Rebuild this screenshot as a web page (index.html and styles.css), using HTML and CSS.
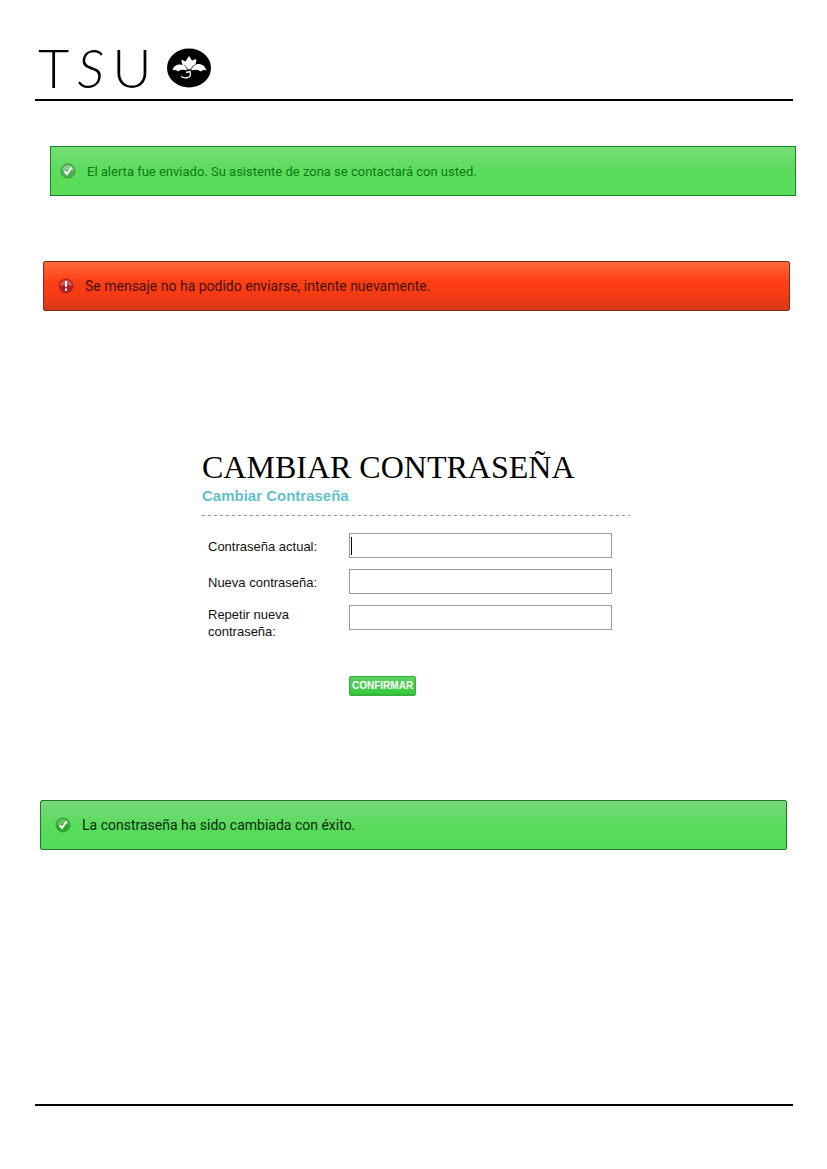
FILE: index.html
```html
<!DOCTYPE html>
<html lang="es">
<head>
<meta charset="utf-8">
<title>TSU - Cambiar Contraseña</title>
<link rel="stylesheet" href="styles.css">
</head>
<body>
<div class="page">
  <header class="header">
    <div class="wordmark"><span>T</span><em>S</em><span>U</span></div>
    <svg class="emblem" viewBox="0 0 44 40" aria-hidden="true">
      <ellipse cx="22" cy="20" rx="22" ry="19.5" fill="#000"/>
      <g fill="#fff">
        <path d="M20.500 21.500C16.500 19 14 15 14.500 11.500L18.500 13.500L22 8L25 12.500L29 11C30 15 27.500 19 23.500 21.500Z"/>
        <path d="M5.500 22.500C6.500 17 12 15.500 16 17C18 18.500 19.500 20.500 20 22.500C17 21.500 13 21.500 11 23.500C9 21.800 7 21.800 5.500 22.500Z"/>
        <path d="M39.500 22.500C38 17 33 15 29 16.500C27 18 25 20 24 22.500C28 21 31 21.500 34 23.500C36 21.800 38 21.800 39.500 22.500Z"/>
      </g>
      <path d="M17.500 17L21.500 22M27 17L23 22" fill="none" stroke="#000" stroke-width=".7"/>
      <path d="M19 24.500L23 23.500Q24.500 28.500 21 29.500Q17 30.500 14 28.500" fill="none" stroke="#fff" stroke-width="1.300"/>
    </svg>
  </header>

  <main class="content">
    <div class="alert sent" role="status">
      <svg class="icon" viewBox="0 0 16 16" aria-hidden="true">
        <circle cx="8" cy="8" r="7" fill="#4fae55" stroke="#3a9441"/>
        <path d="M2 8A6 6 0 0 1 14 8Q8 6 2 8Z" fill="#8aca8d"/>
        <path d="M4.500 8L7 11L11.500 4.500" fill="none" stroke="#fff" stroke-width="2"/>
      </svg>
      <p>El alerta fue enviado. Su asistente de zona se contactará con usted.</p>
    </div>

    <div class="alert failed" role="alert">
      <svg class="icon" viewBox="0 0 16 16" aria-hidden="true">
        <circle cx="8" cy="8" r="7" fill="#b51c20" stroke="#a3292a"/>
        <path d="M2 8A6 6 0 0 1 14 8Q8 6 2 8Z" fill="#d65a55"/>
        <path d="M8 3V9M8 10.500V13" stroke="#fff" stroke-width="2"/>
      </svg>
      <p>Se mensaje no ha podido enviarse, intente nuevamente.</p>
    </div>

    <form class="password">
      <h1>CAMBIAR CONTRASEÑA</h1>
      <h2>Cambiar Contraseña</h2>
      <svg class="rule" aria-hidden="true"><line x1="0" y1="1" x2="100%" y2="1"/></svg>
      <div class="fields">
        <label for="current">Contraseña actual:</label>
        <input class="active" id="current" type="password">
        <label for="new">Nueva contraseña:</label>
        <input id="new" type="password">
        <label for="repeat">Repetir nueva contraseña:</label>
        <input id="repeat" type="password">
        <button type="submit">CONFIRMAR</button>
      </div>
    </form>

    <div class="alert changed" role="status">
      <svg class="icon" viewBox="0 0 16 16" aria-hidden="true">
        <circle cx="8" cy="8" r="7" fill="#26a62c" stroke="#35a33a"/>
        <path d="M2 8A6 6 0 0 1 14 8Q8 6 2 8Z" fill="#65bf66"/>
        <path d="M4.500 8L7 11L11.500 4.500" fill="none" stroke="#fff" stroke-width="2"/>
      </svg>
      <p>La constraseña ha sido cambiada con éxito.</p>
    </div>
  </main>
  <footer class="footer"></footer>
</div>
</body>
</html>
```
FILE: styles.css
```css
* { box-sizing: border-box; }
body {
  margin: 0;
  background: #fff;
  color: #111;
  font: 13px/17px "Liberation Sans", Arial, sans-serif;
}
h1, h2, p { margin: 0; }
.page {
  display: flex;
  flex-direction: column;
  min-height: 100vh;
  padding: 48px 34px 63px 35px;
}
.header {
  display: flex;
  gap: 16px;
  height: 53px;
  padding-left: 3px;
  border-bottom: 2px solid #000;
}
.wordmark {
  display: flex;
  gap: 8px;
  color: #000;
  font: 300 54px/40px Lato, sans-serif;
}
.emblem { width: 44px; height: 40px; }
.content {
  display: flex;
  flex: 1;
  flex-direction: column;
}
.alert {
  display: flex;
  align-items: center;
  gap: 11px;
  min-height: 50px;
  padding: 0 14px;
  border: 1px solid;
  font-family: Roboto, sans-serif;
  font-size: 14px;
}
.icon { flex: none; width: 16px; height: 16px; }
.sent {
  margin: 45px -3px 0 15px;
  padding-left: 9px;
  border-color: #168526;
  background: linear-gradient(#78de78, #5bdc5b 50%, #5bdc5b);
  color: #0b7a16;
  font-size: 13px;
}
.failed {
  margin: 65px 3px 0 8px;
  border-color: #842a17;
  border-radius: 2px;
  background: linear-gradient(#ff6a3c, #ff3e14 42%, #f83b12 65%, #d43a1a);
  color: #431108;
}
.changed {
  margin: 104px 6px 0 5px;
  border-color: #22772b;
  border-radius: 2px;
  background: linear-gradient(#78d87c, #57dc5b 55%, #54dc56);
  color: #0c280d;
}
.password {
  width: 100%;
  max-width: 595px;
  margin-top: 138px;
  padding-left: 167px;
}
.password h1 {
  color: #000;
  font: 400 32px/36px "Liberation Serif", serif;
  white-space: nowrap;
}
.password h2 {
  color: #62bfcb;
  font: 700 15px/22px "Liberation Sans", sans-serif;
}
.rule { display: block; width: 100%; height: 2px; margin-top: 7px; }
.rule line { stroke: #999; stroke-width: 1px; stroke-dasharray: 3 3; shape-rendering: crispEdges; }
.fields {
  display: grid;
  grid-template-columns: 141px 1fr;
  row-gap: 11px;
  padding: 17px 18px 0 6px;
}
.fields label {
  width: 116px;
  padding-top: 5px;
}
.fields label[for="repeat"] { padding-top: 1px; }
.fields input {
  width: 100%;
  height: 25px;
  padding: 2px 4px;
  border: 1px solid #999;
  background: #fff;
}
.fields .active {
  background: linear-gradient(#000, #000) 1px center / 1px 18px no-repeat #fff;
}
.fields button {
  grid-column: 2;
  justify-self: start;
  height: 20px;
  margin-top: 25px;
  padding: 0 2px;
  border: 1px solid #35b23c;
  border-bottom-width: 2px;
  border-radius: 2px;
  background: linear-gradient(#5ad05d, #36c83e);
  color: #fff;
  font: 700 10px/16px "Liberation Sans", sans-serif;
}
.footer { border-top: 2px solid #000; }
```
